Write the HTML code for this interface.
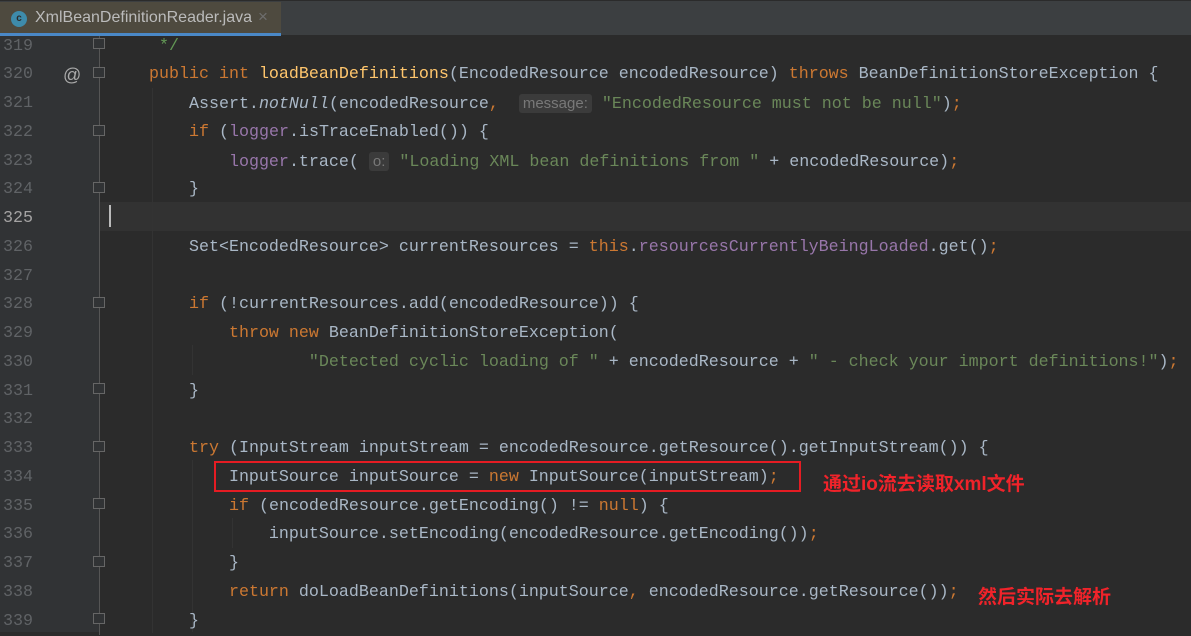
<!DOCTYPE html>
<html><head><meta charset="utf-8"><style>
body{margin:0;width:1191px;height:632px;overflow:hidden;background:#2b2b2b;position:relative;font-family:"Liberation Mono",monospace;}
.tabbar{position:absolute;left:0;top:0;width:1191px;height:35px;background:#3c3f41;z-index:5;border-top:1px solid #2b2b2b;box-sizing:border-box}
.tab{position:absolute;left:0;top:1px;width:281px;height:31px;background:#4e4a3f;}
.tab .ul{position:absolute;left:0;top:31px;width:281px;height:3px;background:#4a88c7}
.tab .t{position:absolute;left:35px;top:7px;font:16px "Liberation Sans",sans-serif;color:#bbbbbb}
.tab .x{position:absolute;left:258px;top:5px;font:17px "Liberation Sans",sans-serif;color:#6e6e6e}
.ic{position:absolute;left:11px;top:9px;width:16px;height:16px;border-radius:50%;background:#3e8bab;color:#2b2b2b;font:bold 10px "Liberation Sans",sans-serif;text-align:center;line-height:16px}
.gutter{position:absolute;left:0;top:0;width:100px;height:632px;background:#313335}
.fold{position:absolute;left:99px;top:35px;width:1px;height:600px;background:#555}
.cur{position:absolute;left:100px;top:202px;width:1091px;height:29px;background:#323232}
.caret{position:absolute;left:109px;top:205px;width:2px;height:22px;background:#bbb}
.lines{position:absolute;left:0;top:32.5px;}
.l{height:28.75px;line-height:28.75px;font-size:16.67px;white-space:pre;position:relative}
.n{position:absolute;left:0;width:33px;text-align:right;color:#606366}
.c{position:absolute;left:109px;color:#a9b7c6}
.k{color:#cc7832}.m{color:#ffc66d}.s{color:#6a8759}.f{color:#9876aa}.cm{color:#629755}
.i{font-style:italic}
.hint{background:#3b3b3b;color:#787878;font-family:"Liberation Sans",sans-serif;font-size:15px;border-radius:3px;padding:1px 4px}
.fm{position:absolute;left:93px;width:12px;height:11px;border:1px solid #666;box-sizing:border-box;background:#313335}
.guide{position:absolute;width:1px;background:#333}
.box{position:absolute;left:214px;top:461px;width:587px;height:31px;border:2px solid #e51c23;box-sizing:border-box}
.note{position:absolute;color:#f0232a;font:bold 19px "Liberation Sans","Noto Sans CJK SC",sans-serif}
</style></head><body>
<div class="gutter"></div>
<div class="fold"></div>
<div class="cur"></div>
<div class="guide" style="left:152px;top:88px;height:545px"></div>
<div class="guide" style="left:192px;top:345px;height:30px"></div>
<div class="guide" style="left:192px;top:460px;height:172px"></div>
<div class="guide" style="left:232px;top:518px;height:30px"></div>
<div class="caret"></div>
<div class="lines">
<div class="l"><span class="n">319</span><span class="c">     <span class="cm">*/</span></span></div>
<div class="l"><span class="n">320</span><span style="position:absolute;left:63px;color:#aaa;font-family:'Liberation Sans';font-size:18px">@</span><span class="c">    <span class="k">public int </span><span class="m">loadBeanDefinitions</span>(EncodedResource encodedResource) <span class="k">throws </span>BeanDefinitionStoreException {</span></div>
<div class="l"><span class="n">321</span><span class="c">        Assert.<span class="i">notNull</span>(encodedResource<span class="k">,</span>  <span class="hint">message:</span> <span class="s">"EncodedResource must not be null"</span>)<span class="k">;</span></span></div>
<div class="l"><span class="n">322</span><span class="c">        <span class="k">if </span>(<span class="f">logger</span>.isTraceEnabled()) {</span></div>
<div class="l"><span class="n">323</span><span class="c">            <span class="f">logger</span>.trace( <span class="hint">o:</span> <span class="s">"Loading XML bean definitions from "</span> + encodedResource)<span class="k">;</span></span></div>
<div class="l"><span class="n">324</span><span class="c">        }</span></div>
<div class="l"><span class="n" style="color:#a4a3a3">325</span><span class="c"></span></div>
<div class="l"><span class="n">326</span><span class="c">        Set&lt;EncodedResource&gt; currentResources = <span class="k">this</span>.<span class="f">resourcesCurrentlyBeingLoaded</span>.get()<span class="k">;</span></span></div>
<div class="l"><span class="n">327</span><span class="c"></span></div>
<div class="l"><span class="n">328</span><span class="c">        <span class="k">if </span>(!currentResources.add(encodedResource)) {</span></div>
<div class="l"><span class="n">329</span><span class="c">            <span class="k">throw new </span>BeanDefinitionStoreException(</span></div>
<div class="l"><span class="n">330</span><span class="c">                    <span class="s">"Detected cyclic loading of "</span> + encodedResource + <span class="s">" - check your import definitions!"</span>)<span class="k">;</span></span></div>
<div class="l"><span class="n">331</span><span class="c">        }</span></div>
<div class="l"><span class="n">332</span><span class="c"></span></div>
<div class="l"><span class="n">333</span><span class="c">        <span class="k">try </span>(InputStream inputStream = encodedResource.getResource().getInputStream()) {</span></div>
<div class="l"><span class="n">334</span><span class="c">            InputSource inputSource = <span class="k">new </span>InputSource(inputStream)<span class="k">;</span></span></div>
<div class="l"><span class="n">335</span><span class="c">            <span class="k">if </span>(encodedResource.getEncoding() != <span class="k">null</span>) {</span></div>
<div class="l"><span class="n">336</span><span class="c">                inputSource.setEncoding(encodedResource.getEncoding())<span class="k">;</span></span></div>
<div class="l"><span class="n">337</span><span class="c">            }</span></div>
<div class="l"><span class="n">338</span><span class="c">            <span class="k">return </span>doLoadBeanDefinitions(inputSource<span class="k">, </span>encodedResource.getResource())<span class="k">;</span></span></div>
<div class="l"><span class="n">339</span><span class="c">        }</span></div>
</div>
<div class="fm" style="top:38px"></div>
<div class="fm" style="top:67px"></div>
<div class="fm" style="top:125px"></div>
<div class="fm" style="top:182px"></div>
<div class="fm" style="top:297px"></div>
<div class="fm" style="top:383px"></div>
<div class="fm" style="top:441px"></div>
<div class="fm" style="top:498px"></div>
<div class="fm" style="top:556px"></div>
<div class="fm" style="top:613px"></div>
<div class="box"></div>
<div class="note" style="left:823px;top:469px">通过io流去读取xml文件</div>
<div class="note" style="left:978px;top:582px">然后实际去解析</div>
<div class="tabbar"><div class="tab"><div class="ic">c</div><div class="t">XmlBeanDefinitionReader.java</div><div class="x">×</div><div class="ul"></div></div></div>
</body></html>
